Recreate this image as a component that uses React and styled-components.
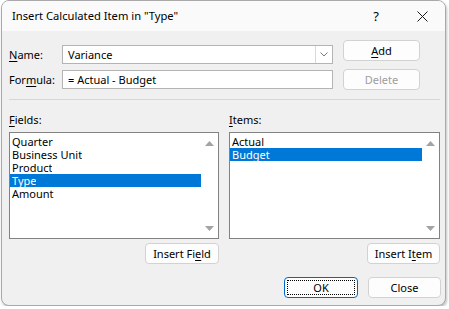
import React from "react";
import styled, { createGlobalStyle } from "styled-components";

const GlobalStyle = createGlobalStyle`
  html, body { margin: 0; padding: 0; background: #ffffff; }
  body { font-family: "Noto Sans", "Liberation Sans", sans-serif; font-size: 11px; color: #000; }
`;

const Window = styled.div`
  width: 443px;
  height: 304px;
  margin: 0 0 0 1px;
  border: 1px solid #a9a9a9;
  border-radius: 8px;
  background: #f0f0f0;
  box-shadow: 1px 2px 3px rgba(0, 0, 0, 0.25);
  overflow: hidden;
  display: flex;
  flex-direction: column;
`;

const TitleBar = styled.div`
  height: 30px;
  flex: none;
  background: #fafafa;
  display: flex;
  align-items: center;
  padding: 0 0 0 10px;
`;

const Title = styled.div`
  flex: 1;
  font-size: 11.2px;
  margin-top: -1px;
`;

const TitleIcon = styled.div`
  width: 46px;
  height: 30px;
  display: flex;
  align-items: center;
  justify-content: center;
  font-size: 13px;
`;

const Body = styled.div`
  padding: 9px 3px 0 7px;
  display: flex;
  flex-direction: column;
`;

const TopSection = styled.div`
  display: grid;
  grid-template-columns: 324px 77px;
  column-gap: 10px;
`;

const FieldGrid = styled.div`
  display: grid;
  grid-template-columns: 53px 271px;
  row-gap: 5px;
  padding-top: 4px;
  align-items: center;
`;

const Label = styled.label`
  white-space: nowrap;
`;

const U = styled.span`
  text-decoration: underline;
  text-underline-offset: 2px;
`;

const TextBox = styled.div`
  height: 19px;
  box-sizing: border-box;
  border: 1px solid #b4b4b4;
  background: #fff;
  display: flex;
  align-items: center;
  padding-left: 5px;
`;

const TextValue = styled.div`
  flex: 1;
`;

const DropButton = styled.div`
  width: 16px;
  height: 17px;
  border-left: 1px solid #d9d9d9;
  display: flex;
  align-items: center;
  justify-content: center;
`;

const ButtonColumn = styled.div`
  display: flex;
  flex-direction: column;
  gap: 8px;
`;

const Button = styled.button`
  font-family: inherit;
  font-size: 11px;
  width: ${(p) => p.$width || 77}px;
  height: 21px;
  box-sizing: border-box;
  padding: 0;
  border-radius: 4px;
  border: 1px solid ${(p) => (p.$default ? "#0067c0" : "#d2d2d2")};
  background: #fdfdfd;
  color: ${(p) => (p.disabled ? "#9d9d9d" : "#000")};
  display: flex;
  align-items: center;
  justify-content: center;
  position: relative;
`;

const FocusRing = styled.span`
  position: absolute;
  inset: 2px;
  border: 1px dotted #000;
`;

const Separator = styled.div`
  height: 1px;
  background: #d6d6d6;
  margin-top: 9px;
  width: 431px;
`;

const ListsRow = styled.div`
  display: grid;
  grid-template-columns: 210px 211px;
  column-gap: 10px;
  margin-top: 10px;
`;

const ListColumn = styled.div`
  display: flex;
  flex-direction: column;
`;

const ListLabel = styled.div`
  height: 22px;
  line-height: 20px;
`;

const ListBox = styled.div`
  height: 107px;
  box-sizing: border-box;
  border: 1px solid #828282;
  background: #fff;
  display: flex;
`;

const Items = styled.div`
  flex: 1;
  padding-top: 2px;
`;

const Item = styled.div`
  height: 13px;
  padding-left: 2px;
  background: ${(p) => (p.$selected ? "#0078d7" : "transparent")};
  color: ${(p) => (p.$selected ? "#fff" : "#000")};
`;

const ItemText = styled.span`
  display: inline-block;
  height: 13px;
  line-height: 13px;
  overflow: hidden;
  vertical-align: top;
`;

const ScrollTrack = styled.div`
  width: 17px;
  display: flex;
  flex-direction: column;
  justify-content: space-between;
  align-items: center;
  padding: 7px 0 6px;
`;

const ListButtonRow = styled.div`
  display: flex;
  justify-content: flex-end;
  margin-top: 4px;
`;

const Footer = styled.div`
  display: flex;
  justify-content: flex-end;
  gap: 10px;
  margin-top: 13px;
  padding-right: 1px;
`;

const Arrow = ({ down }) => (
  <svg width="9" height="6" viewBox="0 0 9 6">
    <polygon points={down ? "0,0 9,0 4.5,5" : "0,6 9,6 4.5,1"} fill="#a3a3a3" />
  </svg>
);

const ListPanel = ({ label, items, selected }) => (
  <ListColumn>
    <ListLabel>{label}</ListLabel>
    <ListBox>
      <Items>
        {items.map((it) => (
          <Item key={it} $selected={it === selected}>
            <ItemText>{it}</ItemText>
          </Item>
        ))}
      </Items>
      <ScrollTrack>
        <Arrow />
        <Arrow down />
      </ScrollTrack>
    </ListBox>
  </ListColumn>
);

export default function App() {
  return (
    <>
      <GlobalStyle />
      <Window>
        <TitleBar>
          <Title>Insert Calculated Item in "Type"</Title>
          <TitleIcon>?</TitleIcon>
          <TitleIcon>
            <svg width="11" height="11" viewBox="0 0 11 11">
              <path d="M0.5 0.5 L10.5 10.5 M10.5 0.5 L0.5 10.5" stroke="#1a1a1a" strokeWidth="1" />
            </svg>
          </TitleIcon>
        </TitleBar>
        <Body>
          <TopSection>
            <FieldGrid>
              <Label>
                <U>N</U>ame:
              </Label>
              <TextBox>
                <TextValue>Variance</TextValue>
                <DropButton>
                  <svg width="8" height="5" viewBox="0 0 8 5">
                    <path d="M0.5 0.5 L4 4 L7.5 0.5" stroke="#7a7a7a" fill="none" />
                  </svg>
                </DropButton>
              </TextBox>
              <Label>
                For<U>m</U>ula:
              </Label>
              <TextBox>
                <TextValue>= Actual - Budget</TextValue>
              </TextBox>
            </FieldGrid>
            <ButtonColumn>
              <Button>
                <span>
                  <U>A</U>dd
                </span>
              </Button>
              <Button disabled>Delete</Button>
            </ButtonColumn>
          </TopSection>
          <Separator />
          <ListsRow>
            <ListColumn>
              <ListPanel
                label={
                  <>
                    <U>F</U>ields:
                  </>
                }
                items={["Quarter", "Business Unit", "Product", "Type", "Amount"]}
                selected="Type"
              />
              <ListButtonRow>
                <Button $width={74}>
                  <span>
                    Insert Fi<U>e</U>ld
                  </span>
                </Button>
              </ListButtonRow>
            </ListColumn>
            <ListColumn>
              <ListPanel
                label={
                  <>
                    <U>I</U>tems:
                  </>
                }
                items={["Actual", "Budget"]}
                selected="Budget"
              />
              <ListButtonRow>
                <Button $width={73}>
                  <span>
                    Insert I<U>t</U>em
                  </span>
                </Button>
              </ListButtonRow>
            </ListColumn>
          </ListsRow>
          <Footer>
            <Button $default $width={74}>
              <FocusRing />
              OK
            </Button>
            <Button $width={73}>Close</Button>
          </Footer>
        </Body>
      </Window>
    </>
  );
}
